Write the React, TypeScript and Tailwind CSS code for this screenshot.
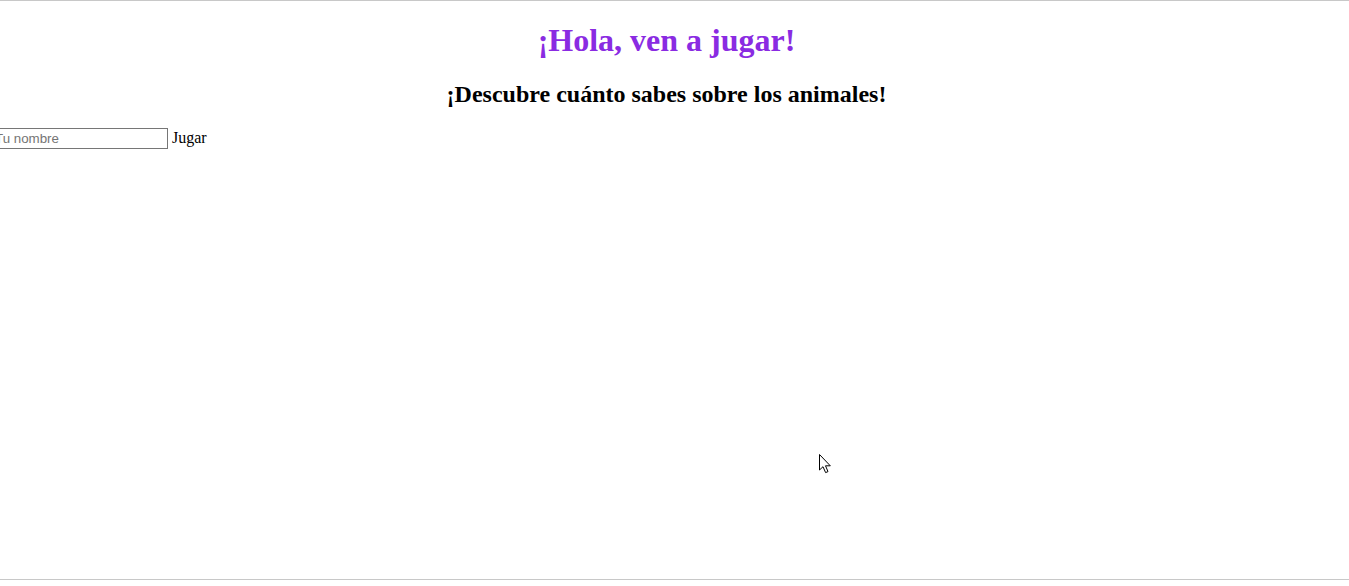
export default function App() {
  return (
    <main className="relative h-[580px] w-full overflow-hidden border-y border-[#c8c8c8] bg-white font-['Liberation_Serif',serif] text-black">
      <div className="-ml-2 w-[1349px]">
        <h1 className="my-[21.44px] text-center text-[32px] font-bold leading-[normal] text-[#8a2be2]">
          ¡Hola, ven a jugar!
        </h1>
        <h2 className="my-[19.92px] text-center text-[24px] font-bold leading-[normal]">
          ¡Descubre cuánto sabes sobre los animales!
        </h2>
        <div className="text-[16px] leading-[normal]">
          <input
            type="text"
            placeholder="Tu nombre"
            className="h-[21px] w-[176px] border border-[#767676] px-[2px] py-[1px] align-baseline font-['Liberation_Sans',Arial,sans-serif] text-[13.33px] text-black outline-none placeholder:text-[#757575]"
          />{" "}
          <button className="cursor-default text-[16px]">Jugar</button>
        </div>
      </div>
      <svg
        className="pointer-events-none absolute left-[819px] top-[453px]"
        width="13"
        height="20"
        viewBox="0 0 13 20"
      >
        <path
          d="M0.5 0.5 L0.5 16 L4 12.7 L6.6 18.6 L9 17.6 L6.5 11.8 L11.3 11.8 Z"
          fill="#fff"
          stroke="#000"
          strokeWidth="1"
          strokeLinejoin="miter"
        />
      </svg>
    </main>
  );
}
